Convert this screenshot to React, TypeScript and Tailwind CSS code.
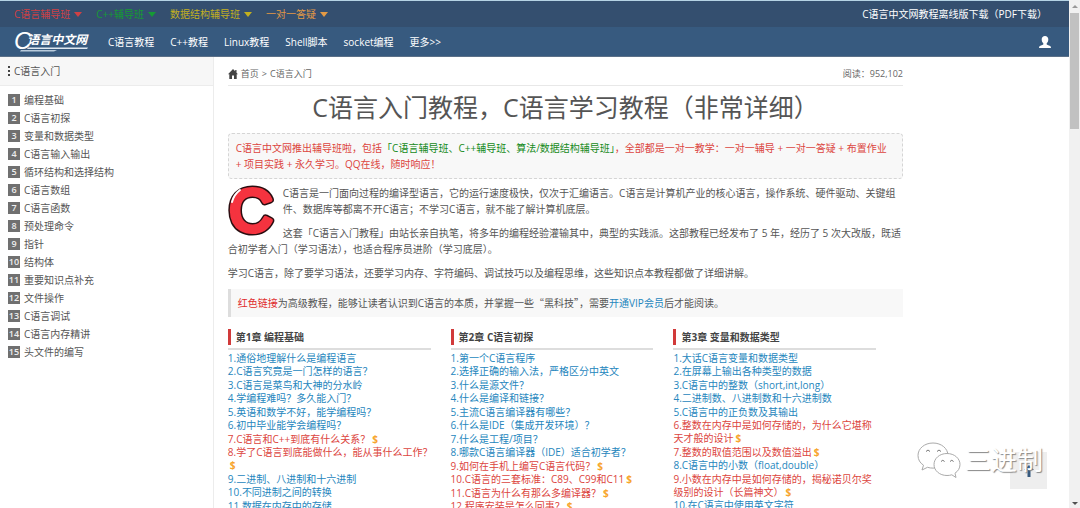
import React from 'react';
import clsx from 'clsx';

interface Lesson {
    title: string;
    vip?: boolean;
}

interface Chapter {
    title: string;
    lessons: Lesson[];
}

const CLASSES = [
    { label: 'C语言辅导班', color: 'text-[#cf4145]' },
    { label: 'C++辅导班', color: 'text-[#169a35]' },
    { label: '数据结构辅导班', color: 'text-[#c3b01f]' },
    { label: '一对一答疑', color: 'text-[#e39a45]' },
];

const NAV = ['C语言教程', 'C++教程', 'Linux教程', 'Shell脚本', 'socket编程', '更多>>'];

const CONTENTS = [
    '编程基础',
    'C语言初探',
    '变量和数据类型',
    'C语言输入输出',
    '循环结构和选择结构',
    'C语言数组',
    'C语言函数',
    '预处理命令',
    '指针',
    '结构体',
    '重要知识点补充',
    '文件操作',
    'C语言调试',
    'C语言内存精讲',
    '头文件的编写',
];

const CHAPTERS: Chapter[] = [
    {
        title: '第1章 编程基础',
        lessons: [
            { title: '通俗地理解什么是编程语言' },
            { title: 'C语言究竟是一门怎样的语言？' },
            { title: 'C语言是菜鸟和大神的分水岭' },
            { title: '学编程难吗？多久能入门？' },
            { title: '英语和数学不好，能学编程吗？' },
            { title: '初中毕业能学会编程吗？' },
            { title: 'C语言和C++到底有什么关系？', vip: true },
            { title: '学了C语言到底能做什么，能从事什么工作？', vip: true },
            { title: '二进制、八进制和十六进制' },
            { title: '不同进制之间的转换' },
            { title: '数据在内存中的存储' },
        ],
    },
    {
        title: '第2章 C语言初探',
        lessons: [
            { title: '第一个C语言程序' },
            { title: '选择正确的输入法，严格区分中英文' },
            { title: '什么是源文件？' },
            { title: '什么是编译和链接？' },
            { title: '主流C语言编译器有哪些？' },
            { title: '什么是IDE（集成开发环境）？' },
            { title: '什么是工程/项目？' },
            { title: '哪款C语言编译器（IDE）适合初学者？' },
            { title: '如何在手机上编写C语言代码？', vip: true },
            { title: 'C语言的三套标准：C89、C99和C11', vip: true },
            { title: 'C语言为什么有那么多编译器？', vip: true },
            { title: '程序安装是怎么回事？', vip: true },
        ],
    },
    {
        title: '第3章 变量和数据类型',
        lessons: [
            { title: '大话C语言变量和数据类型' },
            { title: '在屏幕上输出各种类型的数据' },
            { title: 'C语言中的整数（short,int,long）' },
            { title: '二进制数、八进制数和十六进制数' },
            { title: 'C语言中的正负数及其输出' },
            { title: '整数在内存中是如何存储的，为什么它堪称天才般的设计', vip: true },
            { title: '整数的取值范围以及数值溢出', vip: true },
            { title: 'C语言中的小数（float,double）' },
            { title: '小数在内存中是如何存储的，揭秘诺贝尔奖级别的设计（长篇神文）', vip: true },
            { title: '在C语言中使用英文字符' },
        ],
    },
];

function Caret() {
    return (
        <svg viewBox="0 0 8 5" className="w-2 h-[5px] fill-current" aria-hidden="true">
            <path d="M0 0h8L4 5z" />
        </svg>
    );
}

function Logo() {
    return (
        <a href="#" className="relative flex items-center w-[77px] h-[30px] italic text-white">
            <span className="mb-0.5 font-['Liberation_Sans'] text-[24px] leading-7">C</span>
            <span className="-ml-1 mb-1 text-[12px] leading-4 font-bold whitespace-nowrap">语言中文网</span>
            <svg viewBox="0 0 77 30" className="absolute inset-0 w-full h-full" aria-hidden="true">
                <path d="M14 20.500H74l-1 1.500H13z" fill="#dfe8f1" />
                <path d="M7 23H43l-3 1.500H6z" fill="#b9cbdc" />
            </svg>
        </a>
    );
}

function Header() {
    return (
        <header className="border-t border-[#b5d3e4] text-[10px] leading-4">
            <div className="flex items-center justify-between h-[26px] pl-3.5 pr-[22px] bg-[#344f6f]">
                <div className="flex items-center gap-3.5">
                    {CLASSES.map((item) => (
                        <button key={item.label} type="button" className={clsx('flex items-center gap-1', item.color)}>
                            {item.label}
                            <Caret />
                        </button>
                    ))}
                </div>
                <a href="#" className="text-white">C语言中文网教程离线版下载（PDF下载）</a>
            </div>
            <div className="flex items-center h-[30px] pl-3.5 pr-[18px] bg-[#375a7f] border-b border-[#5b7088]">
                <Logo />
                <nav className="flex flex-1 gap-4 ml-[17px] text-white">
                    {NAV.map((item) => (
                        <a key={item} href="#">{item}</a>
                    ))}
                </nav>
                <a href="#" aria-label="用户">
                    <svg viewBox="0 0 12 12" className="size-3 fill-white">
                        <path d="M6 0C4 0 2.700 1.300 2.700 3.200c0 1.800.6 3.200 1.600 4.100v1.200C3.200 9 .6 9.700.2 10.700L0 12h12l-.2-1.300C11.400 9.700 8.800 9 7.700 8.500V7.300c1-.9 1.600-2.300 1.600-4.100C9.300 1.300 8 0 6 0z" />
                    </svg>
                </a>
            </div>
        </header>
    );
}

function Sidebar() {
    return (
        <aside className="w-1/5 shrink-0 border-r border-[#ececec]">
            <div className="flex items-center gap-1 h-[29px] pl-2 bg-[#f7f7f7] border-b border-[#ececec] text-[10px] leading-4">
                <svg viewBox="0 0 2 10" className="w-0.5 h-2.5 fill-[#444]" aria-hidden="true">
                    <path d="M0 0h2v2H0zM0 4h2v2H0zM0 8h2v2H0z" />
                </svg>
                C语言入门
            </div>
            <ul className="pt-[5px] pl-2">
                {CONTENTS.map((item, i) => (
                    <li key={item}>
                        <a href="#" className="flex items-center gap-1 h-[18px] text-[10px] leading-4">
                            <span className="size-3 bg-[#707070] text-center text-[9px] leading-3 font-semibold text-[#eee]">{i + 1}</span>
                            {item}
                        </a>
                    </li>
                ))}
            </ul>
        </aside>
    );
}

// Cartoon style letter shown at the start of the introduction
function Cover() {
    return (
        <svg viewBox="0 0 47 53" className="float-left w-[47px] h-[53px] mr-2 overflow-visible" role="img" aria-label="C语言">
            <g fontFamily="Liberation Sans" fontSize="60" textAnchor="middle" strokeLinejoin="round">
                <text x="23" y="46" fill="#2a0d10" stroke="#2a0d10" strokeWidth="8">C</text>
                <text x="23" y="46" fill="#f5333f" stroke="#f5333f" strokeWidth="5">C</text>
            </g>
            <path d="M4 17c1.500-6 4-9 8-12" fill="none" stroke="#fff" strokeWidth="2" strokeLinecap="round" />
        </svg>
    );
}

function ChapterList({ chapter }: { chapter: Chapter }) {
    return (
        <section className="w-[33%] pr-4">
            <div className="mr-1 pb-[3px] border-b-2 border-[#ddd]">
                <h2 className="h-4 pl-[5px] border-l-[3px] border-[#d13a3a] text-[10px] leading-4 font-bold text-[#444]">
                    {chapter.title}
                </h2>
            </div>
            <ul className="pt-0.5 text-[10px] leading-[13px]">
                {chapter.lessons.map((lesson, i) => (
                    <li key={lesson.title} className="even:pb-px">
                        <a href="#" className={lesson.vip ? 'text-[#dc4540]' : 'text-[#2586bd]'}>
                            {i + 1}.{lesson.title}
                        </a>
                        {lesson.vip && <span className="inline-block ml-0.5 font-bold text-[#f7a52d]">$</span>}
                    </li>
                ))}
            </ul>
        </section>
    );
}

function Article() {
    return (
        <main className="flex-1 min-w-0 ml-3.5 text-[10px] leading-4">
            <div className="flex items-center justify-between h-[29px] pt-1.5 border-b border-[#e8e8e8] text-[9px] text-[#666]">
                <nav className="flex items-center gap-[3px]">
                    <svg viewBox="0 0 10 10" className="size-2.5 fill-[#444]" aria-hidden="true">
                        <path d="M5 0L0 5.300h1.300V10H4V6.500h2V10h2.700V5.300H10L8.500 3.700V1H7.200v1.300z" />
                    </svg>
                    <a href="#">首页</a>
                    <span>&gt;</span>
                    <a href="#">C语言入门</a>
                </nav>
                <span>阅读：952,102</span>
            </div>

            <h1 className="pt-1 pb-2 text-center text-[25px] leading-[35px] text-[#555]">
                C语言入门教程，C语言学习教程（非常详细）
            </h1>

            <p className="py-1.5 pl-[7px] border border-dashed border-[#d5d5d5] rounded bg-[#f8f8f8] whitespace-nowrap text-[#dc4540]">
                C语言中文网推出辅导班啦，包括<span className="text-[#158a20]">「C语言辅导班、C++辅导班、算法/数据结构辅导班」</span>，全部都是一对一教学：一对一辅导 + 一对一答疑 + 布置作业
                <br />
                + 项目实践 + 永久学习。QQ在线，随时响应！
            </p>

            <div className="pt-1.5">
                <Cover />
                <p className="mb-2">
                    C语言是一门面向过程的编译型语言，它的运行速度极快，仅次于汇编语言。C语言是计算机产业的核心语言，操作系统、硬件驱动、关键组件、数据库等都离不开C语言；不学习C语言，就不能了解计算机底层。
                </p>
                <p className="mb-2">
                    这套「C语言入门教程」由站长亲自执笔，将多年的编程经验灌输其中，典型的实践派。这部教程已经发布了 5 年，经历了 5 次大改版，既适合初学者入门（学习语法），也适合程序员进阶（学习底层）。
                </p>
                <p className="mb-2">
                    学习C语言，除了要学习语法，还要学习内存、字符编码、调试技巧以及编程思维，这些知识点本教程都做了详细讲解。
                </p>
            </div>

            <p className="py-1.5 pl-[7px] border-l-[3px] border-[#ddd] bg-[#f8f8f8]">
                <span className="text-[#e02b2b]">红色链接</span>为高级教程，能够让读者认识到C语言的本质，并掌握一些
                <span className="font-['Noto_Sans_CJK_SC']">“黑科技”</span>，需要<a href="#" className="text-[#2586bd]">开通VIP会员</a>后才能阅读。
            </p>

            <div className="flex pt-3">
                {CHAPTERS.map((chapter) => (
                    <ChapterList key={chapter.title} chapter={chapter} />
                ))}
            </div>
        </main>
    );
}

function Scrollbar() {
    return (
        <div className="flex flex-col items-center justify-between w-[11px] shrink-0 pt-[5px] pb-[3px] bg-[#f1f1f1]" aria-hidden="true">
            <svg viewBox="0 0 6 3" className="w-1.5 h-[3px] fill-[#999]"><path d="M0 3h6L3 0z" /></svg>
            <div className="flex-1 w-full py-[5px]">
                <div className="w-[9px] h-[24%] mx-auto bg-[#c1c1c1]" />
            </div>
            <svg viewBox="0 0 6 3" className="w-1.5 h-[3px] fill-[#505050]"><path d="M0 0h6L3 3z" /></svg>
        </div>
    );
}

function Watermark() {
    return (
        <div className="absolute right-[37px] bottom-[30px] flex items-center gap-1 pointer-events-none">
            <svg viewBox="0 0 44 36" className="w-11 h-9" fill="#fff" stroke="#aaa" strokeWidth="1" aria-hidden="true">
                <path d="M16 1C7.500 1 1 6.500 1 13.500c0 4 2 7.500 5.500 9.700L5 28l5.500-2.700c2 .6 3.500.8 5.500.8 8.500 0 15-5.500 15-12.500S24.500 1 16 1z" />
                <path d="M30 11.500c-7.500 0-13 5-13 11s5.500 11 13 11c1.800 0 3.400-.2 4.800-.7L39 35.500l-1-4.300c3-2 5-5 5-8.700 0-6-5.500-11-13-11z" />
                <path d="M9 9.500q2-3 4 0M20 9.500q2-3 4 0M24 19.500q1.800-2.500 3.600 0M33 19.500q1.800-2.500 3.600 0" fill="none" stroke="#777" />
            </svg>
            <span className="text-[26px] leading-9 text-white [text-shadow:1px_1px_1px_#888]">三进制</span>
        </div>
    );
}

export default function App() {
    return (
        <div className="relative flex h-screen overflow-hidden bg-white font-['Open_Sans','Noto_Sans_CJK_SC',sans-serif] text-[#555]" lang="zh-CN">
            <div className="flex flex-col flex-1 min-w-0">
                <Header />
                <div className="flex flex-1 min-h-0">
                    <Sidebar />
                    <Article />
                    <div className="w-[166px] shrink-0" />
                </div>
            </div>
            <Scrollbar />
            <button type="button" aria-label="返回顶部" className="absolute right-[33px] bottom-[19px] flex items-center justify-center w-[37px] h-[37px] bg-[#eee]">
                <svg viewBox="0 0 10 12" className="w-2.5 h-3 fill-[#375a7f]"><path d="M5 0l5 5H6.500v7h-3V5H0z" /></svg>
            </button>
            <Watermark />
        </div>
    );
}
